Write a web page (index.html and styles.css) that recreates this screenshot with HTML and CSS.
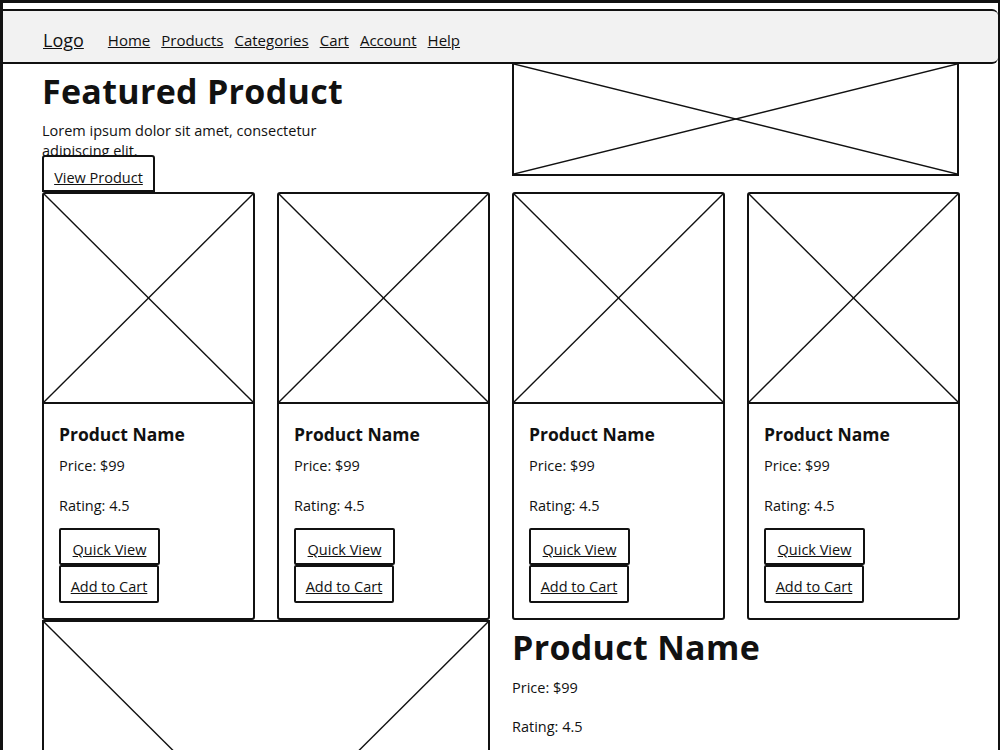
FILE: index.html
```html
<!DOCTYPE html>
<html>
    <head>
        <title>Shop Wireframe</title>
        <link rel="stylesheet" href="styles.css">
    </head>
    <body>
        <div class="frame">
            <div class="topbar">
                <a class="logo" href="#">Logo</a>
                <nav class="nav">
                    <a href="#">Home</a>
                    <a href="#">Products</a>
                    <a href="#">Categories</a>
                    <a href="#">Cart</a>
                    <a href="#">Account</a>
                    <a href="#">Help</a>
                </nav>
            </div>

            <div class="main">
                <div class="hero">
                    <div class="hero-text">
                        <h1>Featured Product</h1>
                        <p class="lead">Lorem ipsum dolor sit amet, consectetur adipiscing elit.</p>
                        <a class="btn btn-view" href="#">View Product</a>
                    </div>
                    <div class="ph hero-img">
                        <svg viewBox="0 0 100 100" preserveAspectRatio="none"><line x1="0" y1="0" x2="100" y2="100"/><line x1="100" y1="0" x2="0" y2="100"/></svg>
                    </div>
                </div>

                <div class="products">
                    <div class="card">
                        <div class="ph thumb">
                            <svg viewBox="0 0 100 100" preserveAspectRatio="none"><line x1="0" y1="0" x2="100" y2="100"/><line x1="100" y1="0" x2="0" y2="100"/></svg>
                        </div>
                        <div class="card-body">
                            <h3>Product Name</h3>
                            <p class="price">Price: $99</p>
                            <p class="rating">Rating: 4.5</p>
                            <div class="actions">
                                <a class="btn btn-quick" href="#">Quick View</a>
                                <a class="btn btn-cart" href="#">Add to Cart</a>
                            </div>
                        </div>
                    </div>
                    <div class="card">
                        <div class="ph thumb">
                            <svg viewBox="0 0 100 100" preserveAspectRatio="none"><line x1="0" y1="0" x2="100" y2="100"/><line x1="100" y1="0" x2="0" y2="100"/></svg>
                        </div>
                        <div class="card-body">
                            <h3>Product Name</h3>
                            <p class="price">Price: $99</p>
                            <p class="rating">Rating: 4.5</p>
                            <div class="actions">
                                <a class="btn btn-quick" href="#">Quick View</a>
                                <a class="btn btn-cart" href="#">Add to Cart</a>
                            </div>
                        </div>
                    </div>
                    <div class="card">
                        <div class="ph thumb">
                            <svg viewBox="0 0 100 100" preserveAspectRatio="none"><line x1="0" y1="0" x2="100" y2="100"/><line x1="100" y1="0" x2="0" y2="100"/></svg>
                        </div>
                        <div class="card-body">
                            <h3>Product Name</h3>
                            <p class="price">Price: $99</p>
                            <p class="rating">Rating: 4.5</p>
                            <div class="actions">
                                <a class="btn btn-quick" href="#">Quick View</a>
                                <a class="btn btn-cart" href="#">Add to Cart</a>
                            </div>
                        </div>
                    </div>
                    <div class="card">
                        <div class="ph thumb">
                            <svg viewBox="0 0 100 100" preserveAspectRatio="none"><line x1="0" y1="0" x2="100" y2="100"/><line x1="100" y1="0" x2="0" y2="100"/></svg>
                        </div>
                        <div class="card-body">
                            <h3>Product Name</h3>
                            <p class="price">Price: $99</p>
                            <p class="rating">Rating: 4.5</p>
                            <div class="actions">
                                <a class="btn btn-quick" href="#">Quick View</a>
                                <a class="btn btn-cart" href="#">Add to Cart</a>
                            </div>
                        </div>
                    </div>
                </div>

                <div class="detail">
                    <div class="ph detail-img">
                        <svg viewBox="0 0 100 100" preserveAspectRatio="none"><line x1="0" y1="0" x2="100" y2="100"/><line x1="100" y1="0" x2="0" y2="100"/></svg>
                    </div>
                    <div class="detail-info">
                        <h2>Product Name</h2>
                        <p class="price">Price: $99</p>
                        <p class="rating">Rating: 4.5</p>
                    </div>
                </div>
            </div>
        </div>
    </body>
</html>
```

FILE: styles.css
```css
body {
    margin: 0;
    font-family: "Comic Sans MS", "Open Sans", sans-serif;
    color: #111;
    background: #fff;
}
a {
    color: #111;
}
p {
    margin: 0;
}
    .frame {
        box-sizing: border-box;
        height: 750px;
        border-top: 3px solid #111;
        border-left: 3px solid #111;
        border-right: 2px solid #111;
        padding-top: 6px;
        overflow: hidden;
    }

    /* top nav bar */
    .topbar {
        box-sizing: border-box;
        display: flex;
        align-items: center;
        height: 55px;
        padding: 6px 0 0 40px;
        background: #f2f2f2;
        border-top: 2px solid #111;
        border-bottom: 2px solid #111;
        border-radius: 0 6px 6px 0;
    }
    .logo {
        font-size: 18px;
        margin-right: 24px;
    }
    .nav {
        display: flex;
        gap: 11px;
        font-size: 15px;
    }

    .main {
        padding: 0 37px 0 39px;
    }

    /* placeholder images */
    .ph {
        box-sizing: border-box;
        position: relative;
        border: 1.5px solid #111;
        background: #fff;
    }
    .ph svg {
        display: block;
        width: 100%;
        height: 100%;
    }
    .ph line {
        stroke: #111;
        stroke-width: 1.4;
        vector-effect: non-scaling-stroke;
    }

    .hero {
        display: grid;
        grid-template-columns: 448px 447px;
        column-gap: 22px;
        height: 128px;
    }
    .hero h1 {
        margin: 4px 0 0;
        font-size: 34px;
        line-height: 46px;
        font-weight: 700;
        letter-spacing: 0.3px;
    }
    .lead {
        width: 310px;
        height: 34px;
        margin-top: 7px;
        font-size: 14.5px;
        line-height: 20px;
    }
    .hero-img {
        height: 112px;
        border-top: none;
        border-width: 2px;
    }

    /* buttons */
    .btn {
        position: relative;
        box-sizing: border-box;
        display: block;
        border: 2px solid #111;
        border-radius: 2px;
        background: #fff;
        font-size: 14.5px;
        line-height: 20px;
        text-align: center;
    }
    .btn-view {
        width: 113px;
        height: 37px;
        padding-top: 11px;
        border-radius: 3px 3px 0 0;
    }
    .btn-quick {
        width: 101px;
        height: 37px;
        padding-top: 10px;
    }
    .btn-cart {
        width: 100px;
        height: 38px;
        padding-top: 10px;
    }

    /* product grid */
    .products {
        display: grid;
        grid-template-columns: repeat(4, 213px);
        column-gap: 22px;
    }
    .card {
        box-sizing: border-box;
        height: 428px;
        border: 2px solid #111;
        border-radius: 3px;
    }
    .card .thumb {
        height: 210px;
        border: none;
        border-bottom: 2px solid #111;
    }
    .card-body {
        padding: 19px 15px 0;
    }
    .card-body h3 {
        margin: 0;
        font-size: 17.5px;
        line-height: 22px;
        font-weight: 700;
    }
    .card-body .price {
        margin-top: 11px;
        font-size: 14.5px;
        line-height: 20px;
    }
    .card-body .rating {
        margin-top: 20px;
        font-size: 14.5px;
        line-height: 20px;
    }
    .actions {
        display: flex;
        flex-direction: column;
        align-items: flex-start;
        margin-top: 12px;
    }

    /* detail section */
    .detail {
        display: grid;
        grid-template-columns: 448px 447px;
        column-gap: 22px;
    }
    .detail-img {
        height: 446px;
        border-width: 2px;
    }
    .detail-info h2 {
        margin: 4px 0 0;
        font-size: 34px;
        line-height: 46px;
        font-weight: 700;
        letter-spacing: 0.3px;
    }
    .detail-info .price {
        margin-top: 8px;
        font-size: 14.5px;
        line-height: 20px;
    }
    .detail-info .rating {
        margin-top: 19px;
        font-size: 14.5px;
        line-height: 20px;
    }
```
